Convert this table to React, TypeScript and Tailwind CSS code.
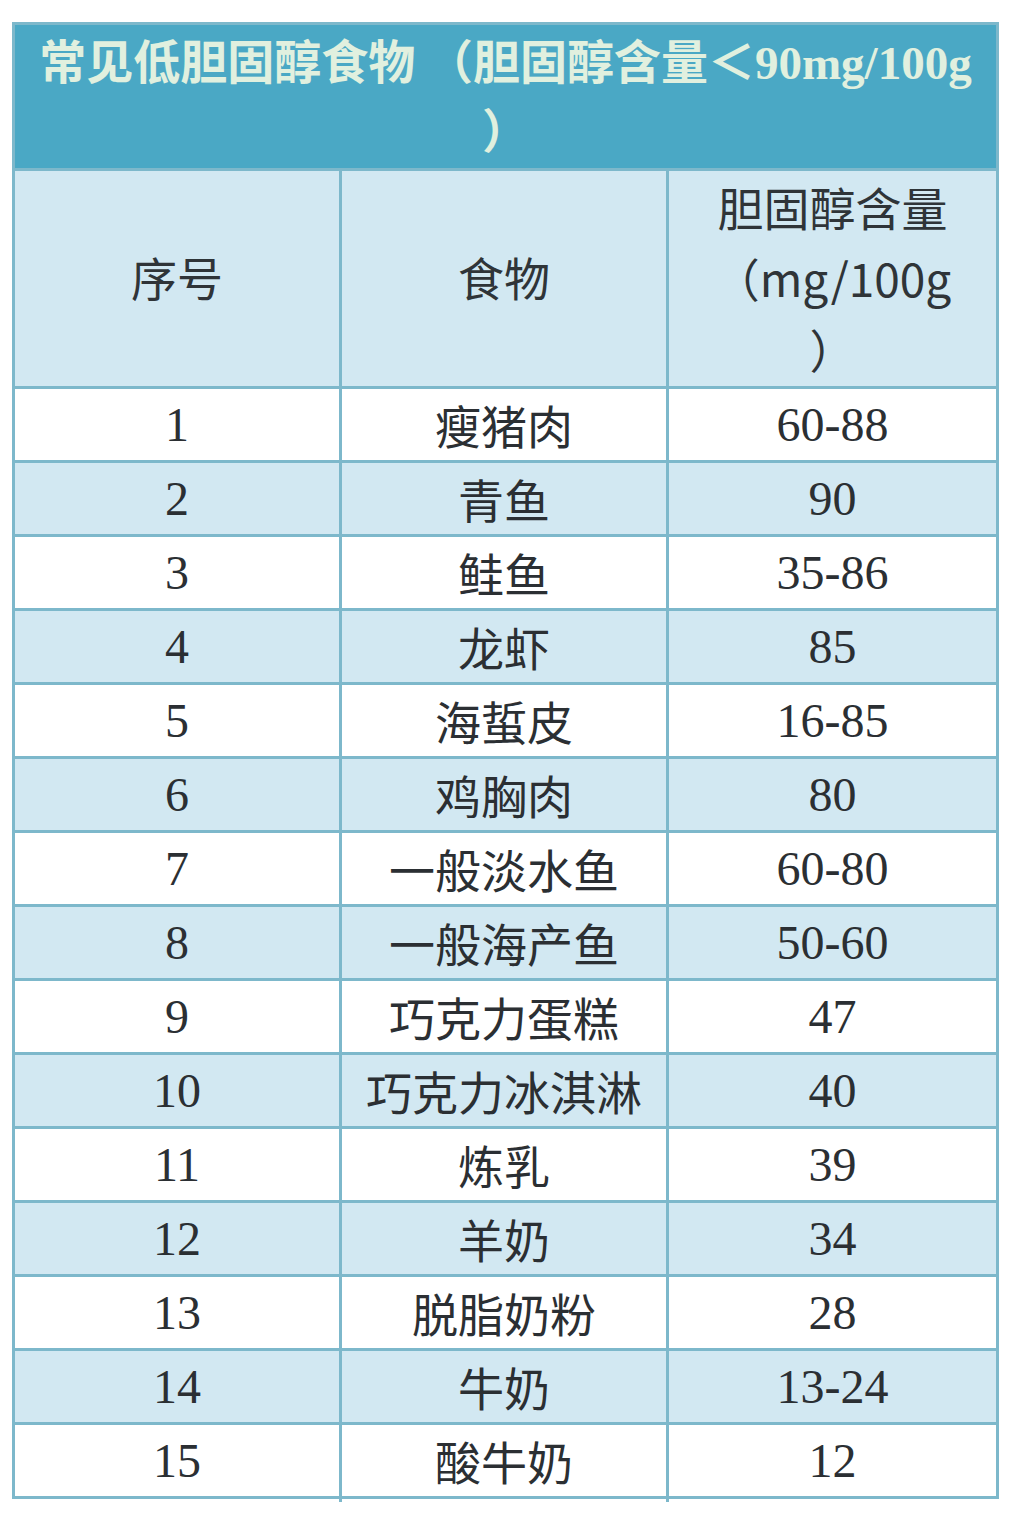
const rows: [string, string, string][] = [
  ["1", "瘦猪肉", "60-88"],
  ["2", "青鱼", "90"],
  ["3", "鲑鱼", "35-86"],
  ["4", "龙虾", "85"],
  ["5", "海蜇皮", "16-85"],
  ["6", "鸡胸肉", "80"],
  ["7", "一般淡水鱼", "60-80"],
  ["8", "一般海产鱼", "50-60"],
  ["9", "巧克力蛋糕", "47"],
  ["10", "巧克力冰淇淋", "40"],
  ["11", "炼乳", "39"],
  ["12", "羊奶", "34"],
  ["13", "脱脂奶粉", "28"],
  ["14", "牛奶", "13-24"],
  ["15", "酸牛奶", "12"],
];

const sans = "font-['Noto_Sans_CJK_SC',sans-serif]";
const serif = "font-['Liberation_Serif',serif]";

export default function App() {
  return (
    <div className="min-h-[1516px] bg-white pt-[22px] pl-[12px]">
      <div className="w-[987px] border-[3px] border-[#7db8cb]">
        <div className="h-[143px] bg-[#4aa8c5] text-center text-[47px] leading-[68px] text-[#e1f0df]">
          <div className={`${sans} font-bold whitespace-nowrap`}>
            常见低胆固醇食物 （胆固醇含量＜
            <span className={`${serif} font-bold`}>90mg/100g</span>
          </div>
          <div className={`${sans} font-bold -mt-[3px]`}>）</div>
        </div>
        <div className="grid grid-cols-3 border-t-[3px] border-[#7db8cb] bg-[#d2e8f2] h-[218px] text-[#2f3438]">
          <div className={`${sans} flex items-center justify-center text-[46px] pb-[8px] border-r-[3px] border-[#7db8cb]`}>
            序号
          </div>
          <div className={`${sans} flex items-center justify-center text-[46px] pb-[8px] border-r-[3px] border-[#7db8cb]`}>
            食物
          </div>
          <div className={`${sans} flex flex-col items-center justify-center text-[46px] leading-[71px] pb-[6px]`}>
            <span>胆固醇含量</span>
            <span>（mg/100g</span>
            <span>）</span>
          </div>
        </div>
        {rows.map(([n, food, val], i) => (
          <div
            key={n}
            className={`grid grid-cols-3 h-[74px] border-t-[3px] border-[#7db8cb] text-[#2b2f33] ${
              i % 2 === 0 ? "bg-white" : "bg-[#d2e8f2]"
            }`}
          >
            <div className={`${serif} flex items-center justify-center text-[48px] pb-[5px] border-r-[3px] border-[#7db8cb]`}>
              {n}
            </div>
            <div className={`${sans} flex items-center justify-center text-[46px] pb-[6px] border-r-[3px] border-[#7db8cb]`}>
              {food}
            </div>
            <div className={`${serif} flex items-center justify-center text-[48px] pb-[5px]`}>{val}</div>
          </div>
        ))}
      </div>
    </div>
  );
}
